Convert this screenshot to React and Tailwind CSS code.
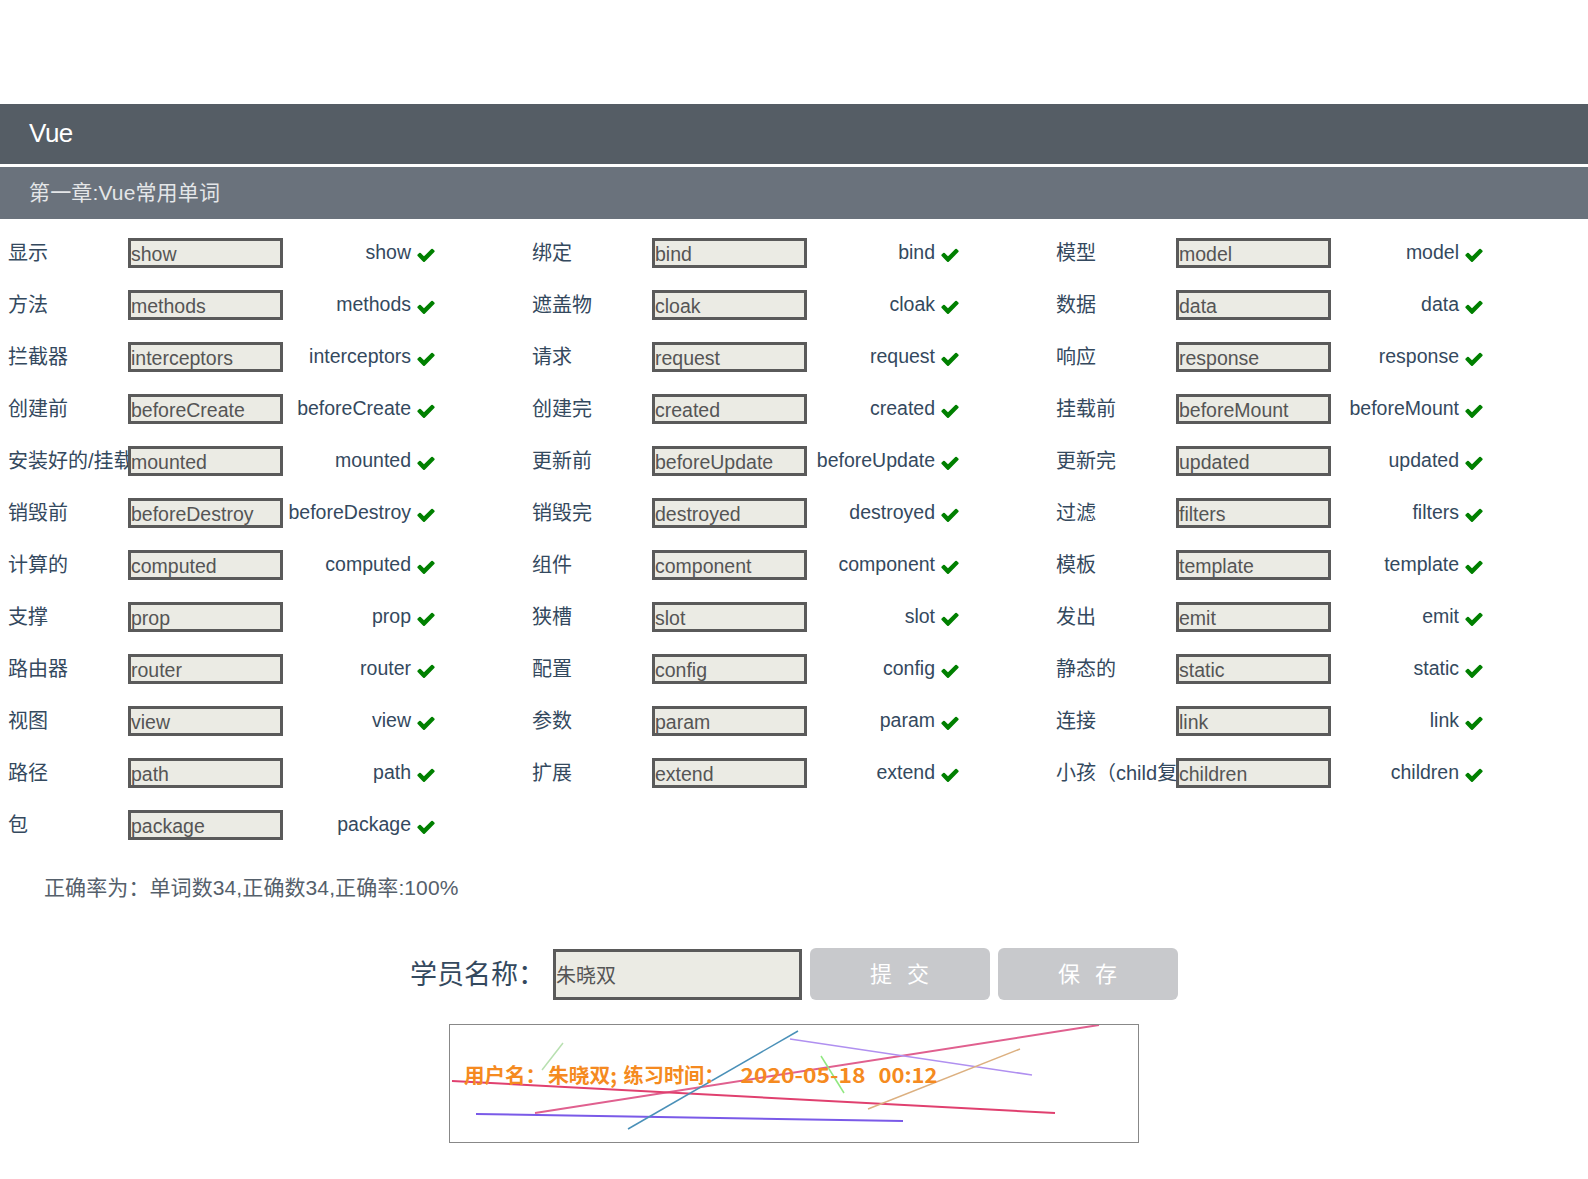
import React from "react";

const font = "font-['Liberation_Sans','Noto_Sans_CJK_SC',sans-serif]";

const words = [
  ["显示", "show"], ["绑定", "bind"], ["模型", "model"],
  ["方法", "methods"], ["遮盖物", "cloak"], ["数据", "data"],
  ["拦截器", "interceptors"], ["请求", "request"], ["响应", "response"],
  ["创建前", "beforeCreate"], ["创建完", "created"], ["挂载前", "beforeMount"],
  ["安装好的/挂载", "mounted"], ["更新前", "beforeUpdate"], ["更新完", "updated"],
  ["销毁前", "beforeDestroy"], ["销毁完", "destroyed"], ["过滤", "filters"],
  ["计算的", "computed"], ["组件", "component"], ["模板", "template"],
  ["支撑", "prop"], ["狭槽", "slot"], ["发出", "emit"],
  ["路由器", "router"], ["配置", "config"], ["静态的", "static"],
  ["视图", "view"], ["参数", "param"], ["连接", "link"],
  ["路径", "path"], ["扩展", "extend"], ["小孩（child复数）", "children"],
  ["包", "package"],
];

// captcha text pieces: [text, x, stretched width]
const captchaText = [
  ["用户名：", 464, 82],
  ["朱晓双;", 548, 69],
  ["练习时间：", 623.5, 101],
  ["2020-05-18", 740.5, 125],
  ["00:12", 878.5, 59],
];

const captchaLines = [
  [535, 1113, 1099, 1025, "#e0608f", 2],
  [452, 1081, 1055, 1113, "#e0406f", 2],
  [476, 1114, 903, 1121, "#7a5ae8", 2],
  [628, 1129, 798, 1031, "#4a90b8", 1.5],
  [790, 1039, 1032, 1075, "#b090f0", 1.5],
  [868, 1109, 1020, 1049, "#dcb080", 1.5],
  [542, 1070, 563, 1043, "#b8e0b0", 1.5],
  [821, 1056, 844, 1093, "#90e880", 1.5],
];

function CheckIcon() {
  return (
    <svg viewBox="0 0 1792 1792" width="20" height="20" className="ml-[5px] mt-[4px] shrink-0" fill="#008000">
      <path d="M1671 566q0 40-28 68l-724 724-136 136q-28 28-68 28t-68-28l-136-136-362-362q-28-28-28-68t28-68l136-136q28-28 68-28t68 28l294 295 656-657q28-28 68-28t68 28l136 136q28 28 28 68z" />
    </svg>
  );
}

function WordRow({ label, word }) {
  return (
    <div className="flex items-center h-[52px] pl-2">
      <div className="w-[120px] shrink-0 overflow-hidden whitespace-nowrap">{label}</div>
      <input
        readOnly
        value={word}
        className="w-[155px] h-[30px] shrink-0 border-[3px] border-[#5a5a5a] bg-[#ebebe4] text-[#555] text-[19.5px] pt-[2px] outline-none"
      />
      <div className="w-[128px] shrink-0 text-right whitespace-nowrap text-[19.5px]">{word}</div>
      <CheckIcon />
    </div>
  );
}

export default function App() {
  return (
    <div className={`${font} min-h-[1179px] bg-white text-[20px] text-[#34495e] pt-[104px]`}>
      <div className="h-[60px] bg-[#555d65] text-white text-[26px] tracking-[-0.5px] pl-[29px] pb-[2px] flex items-center">Vue</div>
      <div className="h-[52px] mt-[3px] bg-[#6a727c] text-[#e4e6e8] text-[21px] tracking-[0.15px] pl-[29px] flex items-center">第一章:Vue常用单词</div>

      <div className="grid grid-cols-[524px_524px_524px] pt-2">
        {words.map(([label, word]) => (
          <WordRow key={word} label={label} word={word} />
        ))}
      </div>

      <div className="pl-[44px] mt-[23px] text-[21px] tracking-[0.1px] leading-[28px] text-[#55606b]">正确率为：单词数34,正确数34,正确率:100%</div>

      <div className="flex items-center mt-[46px] pl-[410px]">
        <span className="w-[143px] pt-[2px] text-[27px] text-[#34495e] whitespace-nowrap">学员名称：</span>
        <input
          readOnly
          value="朱晓双"
          className="w-[249px] h-[51px] border-[3px] border-[#5a5a5a] bg-[#ebebe4] text-[#555] text-[20px] outline-none"
        />
        <button className="w-[180px] h-[52px] ml-[8px] rounded-[6px] bg-[#c8c9cc] text-white text-[22px] tracking-[1px] whitespace-pre">提  交</button>
        <button className="w-[180px] h-[52px] ml-[8px] rounded-[6px] bg-[#c8c9cc] text-white text-[22px] tracking-[1px] whitespace-pre">保  存</button>
      </div>

      <div className="mt-[24px] ml-[449px] w-[690px] h-[119px] border border-[#888]">
        <svg width="688" height="117" viewBox="450 1025 688 117" className="block">
          {captchaLines.map(([x1, y1, x2, y2, color, w]) => (
            <line key={x1} x1={x1} y1={y1} x2={x2} y2={y2} stroke={color} strokeWidth={w} />
          ))}
          {captchaText.map(([text, x, len]) => (
            <text
              key={x}
              x={x}
              y="1083"
              fill="#f58a20"
              fontSize="20"
              fontWeight="700"
              fontFamily="'Noto Sans CJK SC',sans-serif"
              textLength={len}
              lengthAdjust="spacingAndGlyphs"
            >
              {text}
            </text>
          ))}
        </svg>
      </div>
    </div>
  );
}
